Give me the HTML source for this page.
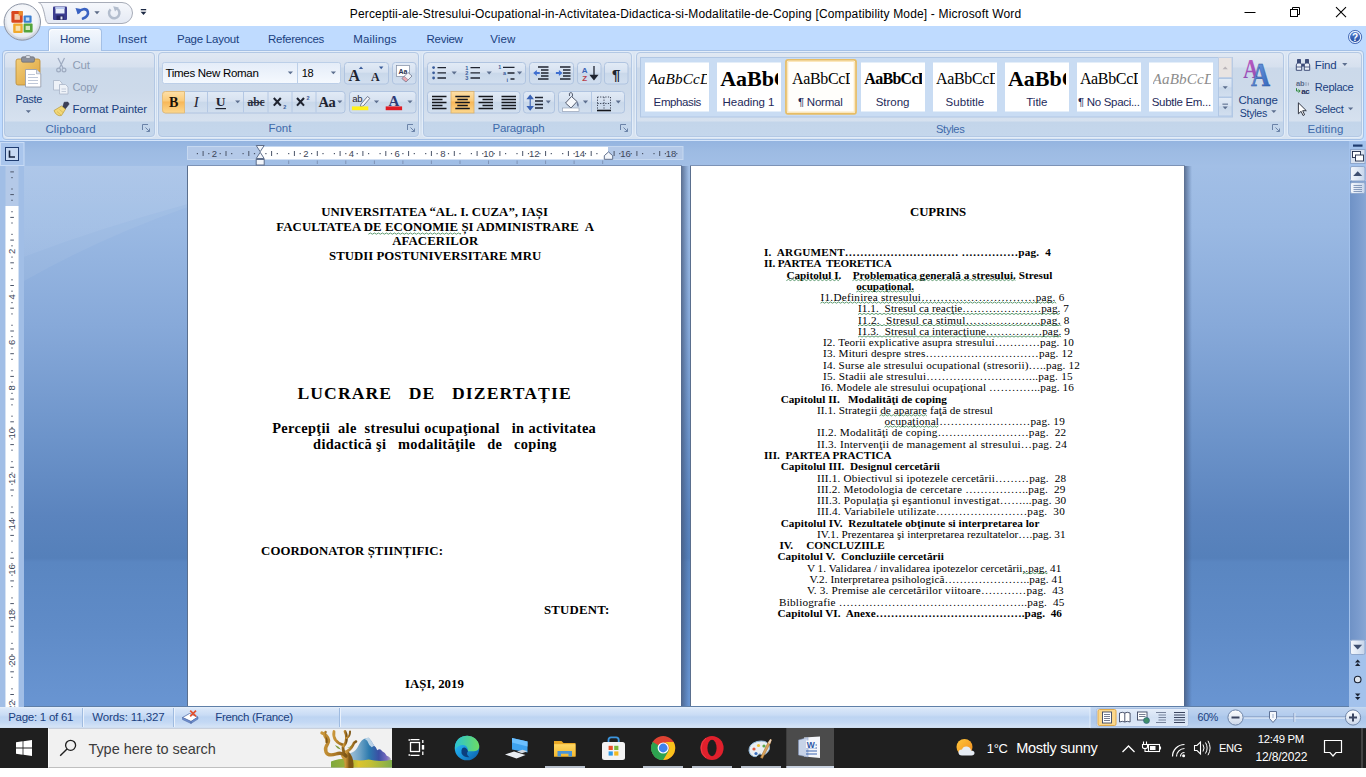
<!DOCTYPE html>
<html><head><meta charset="utf-8"><title>Word</title>
<style>
*{box-sizing:border-box;margin:0;padding:0}
html,body{width:1366px;height:777px;overflow:hidden;background:#fff}
body{position:relative;font-family:"Liberation Sans",sans-serif;font-size:12px;color:#1a3f80}
.a{position:absolute}
.t{position:absolute;white-space:pre;line-height:normal}
.sf{font-family:"Liberation Serif",serif;color:#000}
/* ---------- title / tabs ---------- */
#titlebar{left:0;top:0;width:1366px;height:27px;background:#fff}
#tabrow{left:0;top:26px;width:1366px;height:24px;background:#bfdbff}
#hometab{left:48px;top:28px;width:54px;height:23px;border:1px solid #a4c0e6;border-bottom:none;border-radius:4px 4px 0 0;background:linear-gradient(#f4f8fd,#e8f0fa 55%,#dde7f4);box-shadow:inset 1px 1px 0 #fff}
#ribbonwrap{left:0;top:50px;width:1366px;height:92px;background:#bfdbff}
#ribbon{left:2px;top:50px;width:1362px;height:90px;border:1px solid #a4c0e6;border-radius:4px;background:linear-gradient(#dde7f4,#d2dfee 20%,#ccdaeb 60%,#d9e4f1 100%);box-shadow:0 1px 0 #d6e6fb}
.grp{position:absolute;top:52px;height:85px;border:1px solid #b3c8e4;border-radius:4px;background:linear-gradient(#e0e8f3 0px,#d6e0ee 14px,#cbd9ea 15px,#cddaea 40px,#d6e1ef 68px,#c3d5ea 69px,#c5d7ec 85px);box-shadow:0 0 0 1px #e3edf9}
/* ---------- workspace ---------- */
#rulerband{left:0;top:141px;width:1366px;height:25px;background:linear-gradient(#94b4e0,#9dbbe3 40%,#a2bfe6)}
#workspace{left:0;top:166px;width:1366px;height:541px;background:linear-gradient(#a2bfe6 0px,#9ab9e3 60px,#87a9d9 160px,#6d94ca 270px,#5b84be 350px,#5580ba 392px,#5a86c1 396px,#5f8bc7 460px,#6995d2 541px)}
.page{position:absolute;top:166px;height:541px;background:#fff}
/* ---------- status / taskbar ---------- */
#status{left:0;top:706px;width:1366px;height:23px;background:linear-gradient(#5f7fa8 0,#5f7fa8 1px,#e6effb 1px,#d8e6f8 3px,#c9dcf5 9px,#bdd4f2 11px,#c3d8f4 16px,#d4e3f6 21px,#cbdaee 22px,#b9c6da 23px)}
#taskbar{left:0;top:728px;width:1366px;height:40px;background:#1f1f1f}
#search{left:48px;top:728px;width:344px;height:40px;background:#f1f1f1;border-top:1px solid #c9d0dc;border-bottom:1px solid #bfbfbf;border-left:1px solid #fafafa}
</style></head><body>
<div id="titlebar" class="a"></div>
<div id="tabrow" class="a"></div>
<div id="ribbonwrap" class="a"></div>
<div id="ribbon" class="a"></div>
<div id="hometab" class="a"></div>
<div class="grp" style="left:4px;width:151px"></div>
<div class="grp" style="left:158px;width:261px"></div>
<div class="grp" style="left:423px;width:209px"></div>
<div class="grp" style="left:636px;width:648px"></div>
<div class="grp" style="left:1288px;width:74px"></div>
<div id="rulerband" class="a"></div>
<div id="workspace" class="a"></div>
<svg class="a" style="left:0;top:166px" width="1366" height="541" viewBox="0 166 1366 541">
 <defs>
  <linearGradient id="sw1" x1="0" y1="0" x2="0" y2="1"><stop offset="0" stop-color="#fff" stop-opacity=".13"/><stop offset="1" stop-color="#fff" stop-opacity=".10"/></linearGradient>
  <linearGradient id="psh" x1="0" y1="0" x2="1" y2="0"><stop offset="0" stop-color="#4a5a78" stop-opacity=".8"/><stop offset="1" stop-color="#3c5a8c" stop-opacity="0"/></linearGradient>
 </defs>
 <path d="M24 166 H188 V204 Q100 228 24 257 Z" fill="url(#sw1)"/>
 <path d="M24 257 Q100 228 188 204 V207 Q100 238 24 281 Z" fill="#fff" fill-opacity=".06"/>
 <rect x="681" y="166" width="8" height="541" fill="url(#psh)"/>
 <rect x="1184" y="166" width="8" height="541" fill="url(#psh)"/>
</svg>
<div class="page" style="left:188px;width:493px"></div>
<div class="page" style="left:691px;width:493px"></div>
<div class="a" style="left:187px;top:166px;width:1px;height:541px;background:#5a6f8e"></div>
<div class="a" style="left:690px;top:166px;width:1px;height:541px;background:#5a6f8e"></div>
<div class="a" style="left:187px;top:165px;width:495px;height:1px;background:#7d93b6"></div>
<div class="a" style="left:690px;top:165px;width:495px;height:1px;background:#7d93b6"></div>
<div id="status" class="a"></div>
<div id="taskbar" class="a"></div>
<div id="search" class="a"></div>
<!-- title bar art -->
<svg class="a" style="left:0;top:0" width="1366" height="52" viewBox="0 0 1366 52">
 <defs>
  <radialGradient id="ob" cx=".5" cy=".35" r=".75"><stop offset="0" stop-color="#ffffff"/><stop offset=".55" stop-color="#eef1f6"/><stop offset=".8" stop-color="#cfd5df"/><stop offset="1" stop-color="#9aa3b2"/></radialGradient>
  <linearGradient id="qat" x1="0" y1="0" x2="0" y2="1"><stop offset="0" stop-color="#f6f8fc"/><stop offset="1" stop-color="#e4e9f3"/></linearGradient>
  <linearGradient id="hlp" x1="0" y1="0" x2="0" y2="1"><stop offset="0" stop-color="#5b86d6"/><stop offset="1" stop-color="#1f469c"/></linearGradient>
 </defs>
 <!-- QAT -->
 <path d="M38.5 2.5 H122 A10.5 10.5 0 0 1 122 23.5 H49 C45.5 23.5 45.5 18 44 12 C42.5 6 41 3 38.5 2.5 Z" fill="url(#qat)" stroke="#a7acb8" stroke-width="1"/>
 <!-- save -->
 <g>
  <rect x="53" y="6.5" width="14" height="13.5" rx="1" fill="#3b3c8f"/>
  <rect x="55.5" y="7" width="9" height="6.5" fill="#e8eefb"/>
  <rect x="55.5" y="7" width="9" height="2" fill="#b9c7ee"/>
  <rect x="56.5" y="15.5" width="7" height="4.5" fill="#23235f"/>
  <rect x="60.5" y="16.5" width="2" height="3" fill="#e1e6f5"/>
 </g>
 <!-- undo -->
 <path d="M78.500 12.500 C81 8.500 86.500 8 87.800 11.600 C88.800 14.600 86.500 17.500 83 18.600" fill="none" stroke="#3a62c2" stroke-width="2.600" stroke-linecap="round"/>
 <path d="M75.500 8 l6.800 1.200 l-4.600 5.400 z" fill="#3a62c2"/>
 <path d="M94.3 11.2 h5.4 l-2.7 3 z" fill="#5b6a86"/>
 <!-- redo (disabled) -->
 <path d="M116.800 8.500 A5.200 5.200 0 1 1 110.600 9.300" fill="none" stroke="#b3bdcd" stroke-width="2.500"/>
 <path d="M113.200 6.200 l5.600 1.200 l-3.800 4.200 z" fill="#b3bdcd"/>
 <!-- customize -->
 <rect x="140.8" y="9" width="5.4" height="1.3" fill="#1d2a44"/>
 <path d="M140.6 11.8 h5.8 l-2.9 3.2 z" fill="#1d2a44"/>
 <!-- office button -->
 <circle cx="22.3" cy="22" r="18.2" fill="url(#ob)" stroke="#8d95a5" stroke-width="1"/>
 <circle cx="22.3" cy="22" r="15.6" fill="#f4f6fa" fill-opacity=".55"/>
 <g>
  <rect x="11.4" y="11" width="11.3" height="11.7" rx="1.2" fill="#d9471f"/>
  <rect x="14.5" y="14" width="5.4" height="5.8" fill="#f1c9a8"/>
  <rect x="18.6" y="11" width="4.1" height="4.5" fill="#e98a2b"/>
  <rect x="23.6" y="15.4" width="8" height="7.3" rx="1" fill="#3b7fd0"/>
  <rect x="25.8" y="17.4" width="3.6" height="3.4" fill="#c5dcf3"/>
  <rect x="13.2" y="23.6" width="9.5" height="9.4" rx="1" fill="#f1a92c"/>
  <rect x="15.6" y="25.8" width="4.8" height="5" fill="#f9e2ad"/>
  <rect x="23.6" y="23.6" width="9" height="9" rx="1" fill="#55a53a"/>
  <rect x="25.6" y="25.8" width="4.4" height="4.2" fill="#d2e8bd"/>
 </g>
 <!-- window controls -->
 <rect x="1244.5" y="12" width="11" height="1" fill="#000"/>
 <g fill="none" stroke="#000" stroke-width="1">
  <rect x="1290.5" y="9.5" width="7" height="7"/>
  <path d="M1292.5 9.5 V7.5 H1299.5 V14.5 H1297.5"/>
  <path d="M1336 7.2 L1346 17.2 M1346 7.2 L1336 17.2" stroke-width="1.1"/>
 </g>
 <!-- help -->
 <circle cx="1355.1" cy="37" r="5.600" fill="url(#hlp)" stroke="#e8f1fc" stroke-width="1.1"/>
 <circle cx="1355.1" cy="37" r="6.600" fill="none" stroke="#3a5fae" stroke-width=".9"/>
 <text x="1355.1" y="40.600" font-family="Liberation Sans" font-weight="bold" font-size="10" fill="#fff" text-anchor="middle">?</text>
 <!-- tab row bottom line -->
</svg>

<svg class="a" style="left:0;top:50px" width="1366" height="92" viewBox="0 50 1366 92">
<defs>
 <linearGradient id="bg" x1="0" y1="0" x2="0" y2="1"><stop offset="0" stop-color="#e2ebf6"/><stop offset=".45" stop-color="#d6e1f0"/><stop offset=".5" stop-color="#c9d8ea"/><stop offset="1" stop-color="#d2dfef"/></linearGradient>
 <linearGradient id="or" x1="0" y1="0" x2="0" y2="1"><stop offset="0" stop-color="#fde0a8"/><stop offset=".42" stop-color="#fbcb7a"/><stop offset=".5" stop-color="#f8b85a"/><stop offset="1" stop-color="#fcd88e"/></linearGradient>
 <linearGradient id="cb" x1="0" y1="0" x2="0" y2="1"><stop offset="0" stop-color="#e4ecf8"/><stop offset="1" stop-color="#f5f9fe"/></linearGradient>
 <linearGradient id="clipb" x1="0" y1="0" x2="1" y2="1"><stop offset="0" stop-color="#f3cf7a"/><stop offset="1" stop-color="#dca23c"/></linearGradient>
 <linearGradient id="chA" x1="0" y1="0" x2="1" y2="1"><stop offset="0" stop-color="#7da7e8"/><stop offset="1" stop-color="#2b5fb7"/></linearGradient>
 <linearGradient id="chB" x1="0" y1="0" x2="0" y2="1"><stop offset="0" stop-color="#c45bc4"/><stop offset="1" stop-color="#8a4ab0"/></linearGradient>
 <path id="dd" d="M-2.6 -1.4 h5.2 l-2.6 2.9 z" fill="#5d6f8f"/>
 <g id="dl"><path d="M0 0 h5.5 M0 0 v5.5" stroke="#6b83a8" stroke-width="1" fill="none"/><path d="M3 3 l4 4 M7 4 v3 h-3" stroke="#6b83a8" stroke-width="1" fill="none"/></g>
</defs>

<!-- ============ CLIPBOARD ============ -->
<g>
 <!-- paste icon -->
 <rect x="16" y="59" width="24" height="26" rx="2" fill="url(#clipb)" stroke="#b98a36" stroke-width=".8"/>
 <rect x="21.5" y="56.8" width="13" height="5.4" rx="1.5" fill="#8b8f99" stroke="#5f636e" stroke-width=".6"/>
 <rect x="25.5" y="55.5" width="5" height="3" rx="1.5" fill="#d8dbe2" stroke="#5f636e" stroke-width=".5"/>
 <path d="M25.5 69.5 H36.5 L40.8 73.8 V87 H25.5 Z" fill="#fff" stroke="#8f97a8" stroke-width=".8"/>
 <path d="M36.5 69.5 V73.8 H40.8" fill="#dfe5ef" stroke="#8f97a8" stroke-width=".6"/>
 <path d="M28 74.5 h7 M28 77.5 h10 M28 80.5 h10 M28 83.5 h10" stroke="#b8c2d4" stroke-width=".9"/>
 <use href="#dd" x="28.4" y="111.6"/>
 <!-- cut (disabled) -->
 <g stroke="#9eabc0" fill="none" stroke-width="1.2">
  <path d="M58 58 L63 68 M64.5 58 L59.5 68"/>
  <circle cx="58.6" cy="70" r="1.9"/><circle cx="64" cy="70" r="1.9"/>
 </g>
 <!-- copy (disabled) -->
 <g fill="#eef2f8" stroke="#a9b5c8" stroke-width=".8">
  <path d="M53.5 80.5 h6 l2.5 2.5 v7 h-8.5 z"/>
  <path d="M59.5 84.5 h6 l2.5 2.5 v7 h-8.5 z"/>
  <path d="M61.5 89 h4.5 M61.5 91.5 h4.5" stroke="#b7c1d2"/>
 </g>
 <!-- format painter -->
 <g>
  <path d="M64.2 102.2 l3.6 -0.2 l1.4 2 l-4 5 l-2.6 -1.8 z" fill="#3b3f57" stroke="#2a2d40" stroke-width=".5"/>
  <path d="M54 110.5 l7.5 -4.5 l4 3.2 l-4 6.3 q-2.5 .8 -4.5 -.8 q-2.5 -1.8 -3 -4.2 z" fill="#f2d777" stroke="#b79a3a" stroke-width=".7"/>
  <path d="M57 111.5 l4 3.5 M59.5 109.5 l3.5 3" stroke="#caa94a" stroke-width=".6"/>
 </g>
 <use href="#dl" x="142.5" y="124.5"/>
</g>

<!-- ============ FONT ============ -->
<g>
 <!-- combo boxes -->
 <rect x="162.5" y="62.5" width="178" height="21" rx="2" fill="url(#cb)" stroke="#bccfe8"/>
 <path d="M297.5 63 v20" stroke="#bccfe8"/>
 <use href="#dd" x="290.4" y="72.8"/><use href="#dd" x="333.4" y="72.8"/>
 <!-- grow/shrink -->
 <rect x="344.5" y="62.5" width="44" height="21.5" rx="3" fill="url(#bg)" stroke="#b0c4e0"/>
 <text x="354.3" y="80.5" font-family="Liberation Serif" font-weight="bold" font-size="16" fill="#1f2430" text-anchor="middle">A</text>
 <path d="M358.8 69 h4.4 l-2.2 -2.6 z" fill="#3a5c9a"/>
 <text x="375.3" y="80.5" font-family="Liberation Serif" font-weight="bold" font-size="12" fill="#1f2430" text-anchor="middle">A</text>
 <path d="M379 66.6 h4.4 l-2.2 2.6 z" fill="#3a5c9a"/>
 <!-- clear formatting -->
 <rect x="392.5" y="62.5" width="23.5" height="21.5" rx="3" fill="url(#bg)" stroke="#b0c4e0"/>
 <rect x="396.5" y="65.5" width="13" height="11" fill="#fff" stroke="#7f8aa0" stroke-width=".7"/>
 <text x="403" y="74" font-family="Liberation Sans" font-size="7" font-weight="bold" fill="#2a3350" text-anchor="middle">Aa</text>
 <path d="M402 78.5 l6 -6 l4 3.5 l-6 6 z" fill="#f3f5fa" stroke="#6f7890" stroke-width=".8"/>
 <path d="M402 78.5 l2.2 -2.2 l4 3.5 l-2.2 2.2 z" fill="#e9a7b0" stroke="#6f7890" stroke-width=".5"/>

 <!-- row 2 group 1 -->
 <rect x="162.5" y="91.5" width="182.5" height="21.5" rx="3" fill="url(#bg)" stroke="#b0c4e0"/>
 <path d="M162.5 94.5 a3 3 0 0 1 3 -3 H184.5 V113 H165.5 a3 3 0 0 1 -3 -3 Z" fill="url(#or)" stroke="#e3bc7a" stroke-width="1"/>
 <path d="M207.5 92 v20.5 M243.5 92 v20.5 M268 92 v20.5 M292 92 v20.5 M316 92 v20.5" stroke="#b4c8e4" stroke-width="1"/>
 <text x="173.6" y="106.8" font-family="Liberation Serif" font-weight="bold" font-size="14" fill="#1a1208" text-anchor="middle">B</text>
 <text x="196.2" y="106.8" font-family="Liberation Serif" font-style="italic" font-size="15" fill="#1f2430" text-anchor="middle">I</text>
 <text x="220.6" y="106" font-family="Liberation Serif" font-weight="bold" font-size="13.5" fill="#1f2430" text-anchor="middle">U</text>
 <rect x="215.5" y="108" width="10.5" height="1.2" fill="#1f2430"/>
 <use href="#dd" x="237.7" y="101.8"/>
 <text x="256" y="106" font-family="Liberation Serif" font-weight="bold" font-size="11.5" fill="#2a3040" text-anchor="middle">abc</text>
 <rect x="247.5" y="102" width="17" height="1" fill="#2a3040"/>
 <g stroke="#1f2430" stroke-width="2.1" fill="none"><path d="M273.8 98 l7 7.6 M280.8 98 l-7 7.6"/><path d="M297 98 l7 7.6 M304 98 l-7 7.6"/></g>
 <text x="284.8" y="108.6" font-family="Liberation Sans" font-size="5.5" font-weight="bold" fill="#3a5c9a" text-anchor="middle">2</text>
 <text x="308" y="99.8" font-family="Liberation Sans" font-size="5.5" font-weight="bold" fill="#3a5c9a" text-anchor="middle">2</text>
 <text x="327" y="107" font-family="Liberation Serif" font-weight="bold" font-size="14.5" fill="#1f2430" text-anchor="middle" letter-spacing="-.4">Aa</text>
 <use href="#dd" x="339.8" y="101.8"/>
 <!-- row 2 group 2 -->
 <rect x="349.5" y="91.5" width="66.5" height="21.5" rx="3" fill="url(#bg)" stroke="#b0c4e0"/>
 <text x="357.3" y="102.4" font-family="Liberation Sans" font-size="9.5" fill="#1f2430" text-anchor="middle" letter-spacing="-.3">ab</text>
 <path d="M361 104 l6.5 -7.5 l2.3 1.9 l-6.5 7.5 l-3 .9 z" fill="#f4f6fb" stroke="#59627a" stroke-width=".8"/>
 <rect x="351.9" y="106.4" width="16.4" height="3.8" fill="#fff11a"/>
 <use href="#dd" x="376.5" y="101.8"/>
 <text x="393.9" y="105.6" font-family="Liberation Serif" font-weight="bold" font-size="15" fill="#2d3c78" text-anchor="middle">A</text>
 <rect x="385.7" y="106.4" width="16.4" height="3.8" fill="#e01b24"/>
 <use href="#dd" x="410" y="101.8"/>
 <use href="#dl" x="407.5" y="124.5"/>
</g>
<!-- ============ PARAGRAPH ============ -->
<g>
 <!-- row1 -->
 <rect x="427.5" y="62.5" width="98" height="21.5" rx="3" fill="url(#bg)" stroke="#b0c4e0"/>
 
 <!-- bullets -->
 <g fill="#3a5c9a"><circle cx="433.6" cy="67.6" r="1.4"/><circle cx="433.6" cy="72.8" r="1.4"/><circle cx="433.6" cy="78" r="1.4"/></g>
 <path d="M437.5 67.6 h8.5 M437.5 72.8 h8.5 M437.5 78 h8.5" stroke="#1f2430" stroke-width="1.3"/>
 <use href="#dd" x="454.2" y="73"/>
 <!-- numbering -->
 <g font-family="Liberation Sans" font-size="5.6" font-weight="bold" fill="#3a5c9a"><text x="465.2" y="69.6">1</text><text x="465.2" y="74.9">2</text><text x="465.2" y="80.2">3</text></g>
 <path d="M470.5 67.6 h9.5 M470.5 72.8 h9.5 M470.5 78 h9.5" stroke="#1f2430" stroke-width="1.3"/>
 <use href="#dd" x="489.2" y="73"/>
 <!-- multilevel -->
 <g font-family="Liberation Sans" font-size="5.4" font-weight="bold" fill="#3a5c9a"><text x="498.3" y="69.2">1</text><text x="503" y="75">a</text><text x="506.6" y="81.5">i</text></g>
 <path d="M503 67.3 h11.5 M507.5 73 h7 M510.5 79 h4" stroke="#1f2430" stroke-width="1.3"/>
 <use href="#dd" x="519.6" y="73"/>
 <!-- indent -->
 <rect x="529.5" y="62.5" width="44" height="21.5" rx="3" fill="url(#bg)" stroke="#b0c4e0"/>
 <g stroke="#1f2430" stroke-width="1.3"><path d="M538 67 h10.5 M541 70 h7.5 M541 73 h7.5 M541 76 h7.5 M538 79 h10.5" /><path d="M560 67 h10.5 M563 70 h7.5 M563 73 h7.5 M563 76 h7.5 M560 79 h10.5"/></g>
 <path d="M533.2 73 l3.6 -3 v2 h3 v2 h-3 v2 z" fill="#3f6fd0"/>
 <path d="M562.5 73 l-3.6 -3 v2 h-3 v2 h3 v2 z" fill="#3f6fd0"/>
 <!-- sort -->
 <rect x="577.5" y="62.5" width="23.5" height="21.5" rx="3" fill="url(#bg)" stroke="#b0c4e0"/>
 <text x="584.6" y="72.6" font-family="Liberation Sans" font-size="8" font-weight="bold" fill="#3a62b5" text-anchor="middle">A</text>
 <text x="584.6" y="81" font-family="Liberation Sans" font-size="8" font-weight="bold" fill="#b8404a" text-anchor="middle">Z</text>
 <path d="M594 66 v12.5 M590.8 75.5 l3.2 4 l3.2 -4 z" stroke="#1f2430" stroke-width="1.3" fill="#1f2430"/>
 <!-- pilcrow -->
 <rect x="604.5" y="62.5" width="23.5" height="21.5" rx="3" fill="url(#bg)" stroke="#b0c4e0"/>
 <text x="616.2" y="79.5" font-family="Liberation Sans" font-size="15" font-weight="bold" fill="#1f2430" text-anchor="middle">¶</text>
 <!-- row2 -->
 <rect x="427.5" y="91.5" width="92.5" height="21.5" rx="3" fill="url(#bg)" stroke="#b0c4e0"/>
 <rect x="451" y="91.5" width="23" height="21.5" fill="url(#or)" stroke="#d9b06a" stroke-width=".8"/>
 <g stroke="#15171c" stroke-width="1.4">
  <path d="M432 96.5 h14.5 M432 99.5 h10.5 M432 102.5 h14.5 M432 105.5 h10.5 M432 108.5 h14.5"/>
  <path d="M455.3 96.5 h14.5 M457.3 99.5 h10.5 M455.3 102.5 h14.5 M457.3 105.5 h10.5 M455.3 108.5 h14.5"/>
  <path d="M478.5 96.5 h14.5 M482.5 99.5 h10.5 M478.5 102.5 h14.5 M482.5 105.5 h10.5 M478.5 108.5 h14.5"/>
  <path d="M501.5 96.5 h14.5 M501.5 99.5 h14.5 M501.5 102.5 h14.5 M501.5 105.5 h14.5 M501.5 108.5 h14.5"/>
 </g>
 <!-- line spacing -->
 <rect x="523.5" y="91.5" width="31" height="21.5" rx="3" fill="url(#bg)" stroke="#b0c4e0"/>
 <path d="M530.2 96 v13 M527.6 98.6 l2.6 -3.2 l2.6 3.2 z M527.6 106.6 l2.6 3.2 l2.6 -3.2 z" stroke="#3a62b5" stroke-width="1.1" fill="#3a62b5"/>
 <path d="M535 97.5 h8 M535 101 h8 M535 104.5 h8 M535 108 h8" stroke="#1f2430" stroke-width="1.3"/>
 <use href="#dd" x="548.3" y="102"/>
 <!-- shading / borders -->
 <rect x="558.5" y="91.5" width="66" height="21.5" rx="3" fill="url(#bg)" stroke="#b0c4e0"/>
 <path d="M591.5 92 v20.5" stroke="#b4c8e4"/>
 <path d="M565.5 103 l6 -6.5 l5.5 5 l-6 6.5 z" fill="#f6f8fc" stroke="#444c60" stroke-width=".9"/>
 <path d="M569.5 96 q-1 -3.5 1.5 -3.5 q2 .2 1.5 4" fill="none" stroke="#444c60" stroke-width=".9"/>
 <path d="M577 101.5 q2.6 2.6 1.3 5.6 q-2 -1.2 -1.3 -5.6z" fill="#6d7b9a"/>
 <rect x="562.5" y="108" width="16.5" height="3.4" fill="#fff" stroke="#8b97ad" stroke-width=".6"/>
 <use href="#dd" x="585.5" y="102"/>
 <g stroke="#3d4558" stroke-width="1" stroke-dasharray="1.2 1.4" fill="none"><path d="M597.5 97 h13 M597.5 103.5 h13 M597.5 97 v13 M604 97 v13 M610.5 97 v13"/></g>
 <path d="M597 110.5 h14" stroke="#15171c" stroke-width="1.6"/>
 <use href="#dd" x="618.3" y="102"/>
 <use href="#dl" x="620.5" y="124.5"/>
</g>

<!-- ============ STYLES ============ -->
<g>
 <rect x="640.5" y="57.5" width="592" height="59.5" fill="#c9dcf3" stroke="#b1c7e4"/>
 <g fill="#fff">
  <rect x="645" y="62.5" width="64" height="49"/><rect x="717" y="62.5" width="64" height="49"/>
  <rect x="861" y="62.5" width="64" height="49"/><rect x="933" y="62.5" width="64" height="49"/>
  <rect x="1005" y="62.5" width="64" height="49"/><rect x="1077" y="62.5" width="64" height="49"/><rect x="1149" y="62.5" width="64" height="49"/>
 </g>
 <rect x="786" y="59.8" width="70" height="54" rx="2" fill="#fffefb" stroke="#e7bd66" stroke-width="1.8"/>
 <rect x="787.6" y="61.4" width="66.8" height="50.8" rx="1" fill="none" stroke="#fbe7bd" stroke-width="1.4"/>
 <!-- scroll buttons -->
 <rect x="1218.5" y="57.5" width="13.5" height="20" fill="#e9e4e2" stroke="#c1cfe4"/>
 <rect x="1218.5" y="78.5" width="13.5" height="18.5" fill="url(#bg)" stroke="#b1c7e4"/>
 <rect x="1218.5" y="97.5" width="13.5" height="18.5" fill="url(#bg)" stroke="#b1c7e4"/>
 <path d="M1222.6 69.3 h5.2 l-2.6 -2.9 z" fill="#b9b4b8"/>
 <use href="#dd" x="1225.2" y="87.6"/>
 <rect x="1222.4" y="103.6" width="5.6" height="1.1" fill="#5d6f8f"/><use href="#dd" x="1225.2" y="107.8"/>
 <!-- change styles -->
 <text x="1250.8" y="78" font-family="Liberation Serif" font-weight="bold" font-size="27" fill="url(#chB)" text-anchor="middle" transform="translate(1250.8 0) scale(.78 1) translate(-1250.8 0)">A</text>
 <text x="1260.5" y="86" font-family="Liberation Serif" font-weight="bold" font-size="33" fill="url(#chA)" stroke="#2b4f9a" stroke-width=".5" text-anchor="middle" transform="translate(1260.5 0) scale(.8 1) translate(-1260.5 0)">A</text>
 <use href="#dd" x="1273.8" y="111.6"/>
 <use href="#dl" x="1272.5" y="124.5"/>
</g>

<!-- ============ EDITING ============ -->
<g>
 <!-- binoculars -->
 <g fill="#e9eef8" stroke="#2f3d6b" stroke-width=".9">
  <path d="M1296.300 70.300 v-5.500 l1.200 -1.800 v-3.500 h3 v3.500 l1.200 1.800 v5.500 z"/>
  <path d="M1304.300 70.300 v-5.500 l1.200 -1.800 v-3.500 h3 v3.500 l1.200 1.800 v5.500 z"/>
 </g>
 <rect x="1297.500" y="59.500" width="3" height="4" fill="#3b4a78"/><rect x="1305.500" y="59.500" width="3" height="4" fill="#3b4a78"/>
 <rect x="1301.700" y="63.600" width="2.600" height="3" fill="#3b4a78"/>
 <path d="M1296.300 67 h5.400 M1304.300 67 h5.400" stroke="#2f3d6b" stroke-width=".8"/>
 <use href="#dd" x="1344.8" y="64.4"/>
 <!-- replace -->
 <text x="1296" y="86.3" font-family="Liberation Sans" font-size="7.5" font-weight="bold" fill="#5a6a88" letter-spacing="-.2">ab</text>
 <text x="1301.2" y="93.6" font-family="Liberation Sans" font-size="8" font-weight="bold" fill="#1d2c58" letter-spacing="-.3">ac</text>
 <path d="M1296.5 88.2 v2.8 h3.4 M1298.6 89.4 l1.6 1.6 l-1.6 1.6" stroke="#2f8a3c" stroke-width="1" fill="none"/>
 <path d="M1306 82 v4 M1308.3 82.6 v3" stroke="#8c98b0" stroke-width=".9"/>
 <!-- select cursor -->
 <path d="M1298.4 102.8 v11 l2.7 -2.5 l1.9 4.2 l1.6 -.8 l-1.9 -4 h3.6 z" fill="#fff" stroke="#1f2430" stroke-width=".9"/>
 <use href="#dd" x="1350.6" y="108.8"/>
</g>

<!--R3-->
</svg>

<svg class="a" style="left:0;top:141px" width="1366" height="566" viewBox="0 141 1366 566" font-family="Liberation Sans" font-size="9.5" fill="#3c4658">
<defs><linearGradient id="sbb" x1="0" y1="0" x2="1" y2="0"><stop offset="0" stop-color="#f4f7fc"/><stop offset=".5" stop-color="#dfe8f5"/><stop offset="1" stop-color="#c4d3ea"/></linearGradient><linearGradient id="trk" x1="0" y1="0" x2="1" y2="0"><stop offset="0" stop-color="#6f92c6"/><stop offset=".5" stop-color="#7a9bcd"/><stop offset="1" stop-color="#87a6d4"/></linearGradient></defs>
<rect x="0" y="166" width="24" height="541" fill="#a1bee6"/>
<rect x="0.5" y="142.5" width="23.5" height="23" fill="#a9c5ec" stroke="#c9dcf6"/>
<rect x="5.5" y="147.5" width="13" height="13" fill="#c8daf3" stroke="#1f3c70"/>
<path d="M9.5 150.5 v6.5 h5.5" stroke="#15233f" stroke-width="1.6" fill="none"/>
<rect x="187.5" y="146.5" width="495.5" height="13" fill="#b4c9e8" stroke="#c6d8f0" stroke-width="1"/>
<rect x="260" y="147" width="348" height="12.2" fill="#fff"/>
<path d="M203.1 151 v5 M226.0 151 v5 M248.8 151 v5 M271.6 151 v5 M294.4 151 v5 M317.3 151 v5 M340.1 151 v5 M362.9 151 v5 M385.8 151 v5 M408.6 151 v5 M431.4 151 v5 M454.3 151 v5 M477.1 151 v5 M499.9 151 v5 M522.7 151 v5 M545.6 151 v5 M568.4 151 v5 M591.2 151 v5 M614.1 151 v5 M636.9 151 v5 M659.7 151 v5" stroke="#4a5468" stroke-width="1"/>
<g fill="#4a5468"><rect x="196.8" y="153" width="1.2" height="1.2"/><rect x="208.2" y="153" width="1.2" height="1.2"/><rect x="219.6" y="153" width="1.2" height="1.2"/><rect x="231.1" y="153" width="1.2" height="1.2"/><rect x="242.5" y="153" width="1.2" height="1.2"/><rect x="253.9" y="153" width="1.2" height="1.2"/><rect x="265.3" y="153" width="1.2" height="1.2"/><rect x="276.7" y="153" width="1.2" height="1.2"/><rect x="288.1" y="153" width="1.2" height="1.2"/><rect x="299.6" y="153" width="1.2" height="1.2"/><rect x="311.0" y="153" width="1.2" height="1.2"/><rect x="322.4" y="153" width="1.2" height="1.2"/><rect x="333.8" y="153" width="1.2" height="1.2"/><rect x="345.2" y="153" width="1.2" height="1.2"/><rect x="356.6" y="153" width="1.2" height="1.2"/><rect x="368.0" y="153" width="1.2" height="1.2"/><rect x="379.5" y="153" width="1.2" height="1.2"/><rect x="390.9" y="153" width="1.2" height="1.2"/><rect x="402.3" y="153" width="1.2" height="1.2"/><rect x="413.7" y="153" width="1.2" height="1.2"/><rect x="425.1" y="153" width="1.2" height="1.2"/><rect x="436.5" y="153" width="1.2" height="1.2"/><rect x="447.9" y="153" width="1.2" height="1.2"/><rect x="459.4" y="153" width="1.2" height="1.2"/><rect x="470.8" y="153" width="1.2" height="1.2"/><rect x="482.2" y="153" width="1.2" height="1.2"/><rect x="493.6" y="153" width="1.2" height="1.2"/><rect x="505.0" y="153" width="1.2" height="1.2"/><rect x="516.4" y="153" width="1.2" height="1.2"/><rect x="527.9" y="153" width="1.2" height="1.2"/><rect x="539.3" y="153" width="1.2" height="1.2"/><rect x="550.7" y="153" width="1.2" height="1.2"/><rect x="562.1" y="153" width="1.2" height="1.2"/><rect x="573.5" y="153" width="1.2" height="1.2"/><rect x="584.9" y="153" width="1.2" height="1.2"/><rect x="596.3" y="153" width="1.2" height="1.2"/><rect x="607.8" y="153" width="1.2" height="1.2"/><rect x="619.2" y="153" width="1.2" height="1.2"/><rect x="630.6" y="153" width="1.2" height="1.2"/><rect x="642.0" y="153" width="1.2" height="1.2"/><rect x="653.4" y="153" width="1.2" height="1.2"/><rect x="664.8" y="153" width="1.2" height="1.2"/><rect x="676.2" y="153" width="1.2" height="1.2"/></g>
<text x="214.5" y="157" text-anchor="middle">2</text>
<text x="305.9" y="157" text-anchor="middle">2</text>
<text x="351.5" y="157" text-anchor="middle">4</text>
<text x="397.2" y="157" text-anchor="middle">6</text>
<text x="442.8" y="157" text-anchor="middle">8</text>
<text x="488.5" y="157" text-anchor="middle">10</text>
<text x="534.2" y="157" text-anchor="middle">12</text>
<text x="579.8" y="157" text-anchor="middle">14</text>
<text x="625.5" y="157" text-anchor="middle">16</text>
<text x="671.1" y="157" text-anchor="middle">18</text>
<path d="M288.7 160.5 v3.5 M317.3 160.5 v3.5 M345.8 160.5 v3.5 M374.4 160.5 v3.5 M402.9 160.5 v3.5 M431.4 160.5 v3.5 M460.0 160.5 v3.5 M488.5 160.5 v3.5 M517.1 160.5 v3.5 M545.6 160.5 v3.5 M574.1 160.5 v3.5 M602.7 160.5 v3.5" stroke="#7f93b6" stroke-width="1"/>
<g fill="#f3f6fb" stroke="#5f6f8c" stroke-width="1"><path d="M256.2 145.5 h8 l-4 6.2 z"/><path d="M256.2 158.5 h8 l-4 -6.2 z"/><rect x="256.2" y="159.5" width="8" height="5.5"/><path d="M604.3 159.3 v-3.6 l4.2 -3.8 l4.2 3.8 v3.6 z"/></g>
<rect x="5.5" y="166" width="13" height="541" fill="#b4c9e8"/>
<rect x="5.5" y="206.0" width="13" height="501.0" fill="#fff"/>
<path d="M10.3 171.9 h3.6 M10.3 194.6 h3.6 M10.3 217.4 h3.6 M10.3 240.1 h3.6 M10.3 262.8 h3.6 M10.3 285.5 h3.6 M10.3 308.2 h3.6 M10.3 331.0 h3.6 M10.3 353.7 h3.6 M10.3 376.4 h3.6 M10.3 399.1 h3.6 M10.3 421.8 h3.6 M10.3 444.6 h3.6 M10.3 467.3 h3.6 M10.3 490.0 h3.6 M10.3 512.7 h3.6 M10.3 535.4 h3.6 M10.3 558.2 h3.6 M10.3 580.9 h3.6 M10.3 603.6 h3.6 M10.3 626.3 h3.6 M10.3 649.0 h3.6 M10.3 671.8 h3.6 M10.3 694.5 h3.6" stroke="#4a5468" stroke-width="1"/>
<g fill="#4a5468"><rect x="11.4" y="177.0" width="1.2" height="1.2"/><rect x="11.4" y="188.4" width="1.2" height="1.2"/><rect x="11.4" y="199.7" width="1.2" height="1.2"/><rect x="11.4" y="211.1" width="1.2" height="1.2"/><rect x="11.4" y="222.4" width="1.2" height="1.2"/><rect x="11.4" y="233.8" width="1.2" height="1.2"/><rect x="11.4" y="245.2" width="1.2" height="1.2"/><rect x="11.4" y="256.5" width="1.2" height="1.2"/><rect x="11.4" y="267.9" width="1.2" height="1.2"/><rect x="11.4" y="279.2" width="1.2" height="1.2"/><rect x="11.4" y="290.6" width="1.2" height="1.2"/><rect x="11.4" y="302.0" width="1.2" height="1.2"/><rect x="11.4" y="313.3" width="1.2" height="1.2"/><rect x="11.4" y="324.7" width="1.2" height="1.2"/><rect x="11.4" y="336.0" width="1.2" height="1.2"/><rect x="11.4" y="347.4" width="1.2" height="1.2"/><rect x="11.4" y="358.8" width="1.2" height="1.2"/><rect x="11.4" y="370.1" width="1.2" height="1.2"/><rect x="11.4" y="381.5" width="1.2" height="1.2"/><rect x="11.4" y="392.8" width="1.2" height="1.2"/><rect x="11.4" y="404.2" width="1.2" height="1.2"/><rect x="11.4" y="415.6" width="1.2" height="1.2"/><rect x="11.4" y="426.9" width="1.2" height="1.2"/><rect x="11.4" y="438.3" width="1.2" height="1.2"/><rect x="11.4" y="449.6" width="1.2" height="1.2"/><rect x="11.4" y="461.0" width="1.2" height="1.2"/><rect x="11.4" y="472.4" width="1.2" height="1.2"/><rect x="11.4" y="483.7" width="1.2" height="1.2"/><rect x="11.4" y="495.1" width="1.2" height="1.2"/><rect x="11.4" y="506.4" width="1.2" height="1.2"/><rect x="11.4" y="517.8" width="1.2" height="1.2"/><rect x="11.4" y="529.2" width="1.2" height="1.2"/><rect x="11.4" y="540.5" width="1.2" height="1.2"/><rect x="11.4" y="551.9" width="1.2" height="1.2"/><rect x="11.4" y="563.2" width="1.2" height="1.2"/><rect x="11.4" y="574.6" width="1.2" height="1.2"/><rect x="11.4" y="586.0" width="1.2" height="1.2"/><rect x="11.4" y="597.3" width="1.2" height="1.2"/><rect x="11.4" y="608.7" width="1.2" height="1.2"/><rect x="11.4" y="620.0" width="1.2" height="1.2"/><rect x="11.4" y="631.4" width="1.2" height="1.2"/><rect x="11.4" y="642.8" width="1.2" height="1.2"/><rect x="11.4" y="654.1" width="1.2" height="1.2"/><rect x="11.4" y="665.5" width="1.2" height="1.2"/><rect x="11.4" y="676.8" width="1.2" height="1.2"/><rect x="11.4" y="688.2" width="1.2" height="1.2"/><rect x="11.4" y="699.6" width="1.2" height="1.2"/></g>
<text transform="translate(15.4 251.4) rotate(-90)" text-anchor="middle">2</text>
<text transform="translate(15.4 296.9) rotate(-90)" text-anchor="middle">4</text>
<text transform="translate(15.4 342.3) rotate(-90)" text-anchor="middle">6</text>
<text transform="translate(15.4 387.8) rotate(-90)" text-anchor="middle">8</text>
<text transform="translate(15.4 433.2) rotate(-90)" text-anchor="middle">10</text>
<text transform="translate(15.4 478.6) rotate(-90)" text-anchor="middle">12</text>
<text transform="translate(15.4 524.1) rotate(-90)" text-anchor="middle">14</text>
<text transform="translate(15.4 569.5) rotate(-90)" text-anchor="middle">16</text>
<text transform="translate(15.4 615.0) rotate(-90)" text-anchor="middle">18</text>
<text transform="translate(15.4 660.4) rotate(-90)" text-anchor="middle">20</text>
<text transform="translate(15.4 705.8) rotate(-90)" text-anchor="middle">22</text>
<rect x="1349" y="141" width="17" height="566" fill="#a3c2ec"/>
<rect x="1350" y="181" width="16" height="459" fill="url(#trk)"/>
<rect x="1353" y="144.5" width="9.5" height="2.2" fill="#1f3c70"/>
<rect x="1350.5" y="149.5" width="14.5" height="14" fill="#d9e2ef" stroke="#8ea7cd"/>
<rect x="1352.5" y="151.5" width="8" height="6" fill="#fff" stroke="#1f2c48" stroke-width=".9"/><rect x="1355.5" y="155" width="8" height="6" fill="#fff" stroke="#1f2c48" stroke-width=".9"/>
<rect x="1350.5" y="166.5" width="14.5" height="14.5" rx="1.5" fill="url(#sbb)" stroke="#8ea7cd"/>
<path d="M1353.2 176 h9 l-4.5 -4.8 z" fill="#3e4f70"/>
<rect x="1350.5" y="182.5" width="14.5" height="11" rx="1.5" fill="url(#sbb)" stroke="#8ea7cd"/>
<path d="M1353.5 185.5 h8.5 M1353.5 187.5 h8.5 M1353.5 189.5 h8.5 M1353.5 191.5 h8.5" stroke="#6f86ad" stroke-width=".8"/>
<rect x="1350.5" y="640" width="14.5" height="14.5" rx="1.5" fill="url(#sbb)" stroke="#8ea7cd"/>
<path d="M1353.2 644.8 h9 l-4.5 4.8 z" fill="#3e4f70"/>
<g fill="#1a2233"><path d="M1355 662.5 h5.4 l-2.7 -3 z M1355 666 h5.4 l-2.7 -3 z"/><path d="M1355 693.5 h5.4 l-2.7 3 z M1355 697 h5.4 l-2.7 3 z"/></g>
<circle cx="1357.7" cy="679.5" r="3.3" fill="#dfe5ee" stroke="#1a2233" stroke-width="1.1"/>
</svg>
<svg class="a" style="left:0;top:706px" width="1366" height="23" viewBox="0 706 1366 23">
 <defs>
  <linearGradient id="vb" x1="0" y1="0" x2="0" y2="1"><stop offset="0" stop-color="#e7effa"/><stop offset=".5" stop-color="#d3e1f4"/><stop offset="1" stop-color="#dfe9f7"/></linearGradient>
  <linearGradient id="zc" x1="0" y1="0" x2="0" y2="1"><stop offset="0" stop-color="#ffffff"/><stop offset="1" stop-color="#c9d6ea"/></linearGradient>
 </defs>
 <!-- separators -->
 <g stroke="#9fbbe0" stroke-width="1"><path d="M82.5 708 v19 M173.5 708 v19 M339.5 708 v19"/></g>
 <g stroke="#e9f1fc" stroke-width="1"><path d="M83.5 708 v19 M174.5 708 v19 M340.5 708 v19"/></g>
 <!-- proofing icon -->
 <path d="M182.5 717.5 l7 -4 l8.5 3.5 l-7 4.5 z" fill="#fff" stroke="#5570a8" stroke-width=".8"/>
 <path d="M182.5 717.5 v2 l8.5 4 v-2 z M191 721.5 v2 l7 -4.5 v-2 z" fill="#6f8fd0" stroke="#4a66a0" stroke-width=".5"/>
 <path d="M190.2 710.6 l5.8 5.8 M196 710.6 l-5.8 5.8" stroke="#e2502e" stroke-width="1.7"/>
 <!-- right part -->
 <rect x="1090" y="707" width="276" height="21.500" fill="#86aade" fill-opacity=".32"/><rect x="1089.500" y="707" width="1" height="21" fill="#e6effb"/>
 <rect x="1096.5" y="708.5" width="92" height="18" rx="2" fill="url(#vb)" stroke="#a9c0e2"/>
 <rect x="1098" y="709.5" width="18" height="16" rx="1.5" fill="#fbd88c" stroke="#e0a94a"/>
 <g stroke="#3b4560" stroke-width=".9" fill="#fff">
  <rect x="1102.5" y="712" width="9" height="11"/><path d="M1104 714.5 h6 M1104 716.5 h6 M1104 718.5 h6 M1104 720.5 h6" stroke-width=".7"/>
  <path d="M1119.5 713 q3 -1.4 5.3 0 q2.3 -1.4 5.3 0 v9 q-3 -1.4 -5.3 0 q-2.3 -1.4 -5.3 0 z M1124.8 713 v9"/>
  <rect x="1137.5" y="712" width="9.5" height="8"/><path d="M1139 714.5 h6.5 M1139 716.5 h6.5" stroke-width=".7"/>
 </g>
 <circle cx="1146.5" cy="720.5" r="3" fill="#3f8f6a" stroke="#2c5f86" stroke-width=".6"/>
 <g stroke="#6c7892" stroke-width=".9"><path d="M1156 712.5 h10 M1158.5 715 h7.5 M1158.5 717.5 h7.5 M1158.5 720 h7.5 M1156 722.5 h10"/></g>
 <g stroke="#3b4560" stroke-width="1"><path d="M1174 712.5 h11 M1174 715 h11 M1174 717.5 h11 M1174 720 h11 M1174 722.5 h11"/></g>
 <!-- zoom slider -->
 <circle cx="1235.5" cy="717.5" r="7.6" fill="url(#zc)" stroke="#6f85a8" stroke-width="1"/>
 <rect x="1231.5" y="716.5" width="8" height="2" fill="#3b4560"/>
 <circle cx="1353" cy="717.5" r="7.6" fill="url(#zc)" stroke="#6f85a8" stroke-width="1"/>
 <path d="M1349 717.5 h8 M1353 713.5 v8" stroke="#3b4560" stroke-width="2"/>
 <path d="M1244 717 h101" stroke="#7c93b8" stroke-width="1"/><path d="M1244 718 h101" stroke="#eef4fc" stroke-width="1"/>
 <path d="M1294.8 713 v9" stroke="#eef4fc" stroke-width="1"/><path d="M1293.8 713 v9" stroke="#8ca2c6" stroke-width="1"/>
 <path d="M1269.5 711.5 h7 v7 l-3.5 4 l-3.5 -4 z" fill="#f4f7fc" stroke="#5f7397" stroke-width="1"/>
 <path d="M1273 714 v4" stroke="#9fb0cc" stroke-width="1"/>
</svg>

<svg class="a" style="left:0;top:728px" width="1366" height="40" viewBox="0 728 1366 40">
 <defs>
  <linearGradient id="edg" x1="0" y1="0" x2="1" y2="1"><stop offset="0" stop-color="#35c1f1"/><stop offset=".45" stop-color="#1b9de2"/><stop offset="1" stop-color="#0c59a4"/></linearGradient>
  <linearGradient id="edg2" x1="0" y1="0" x2="1" y2="0"><stop offset="0" stop-color="#2bc3d2"/><stop offset="1" stop-color="#6ddc63"/></linearGradient>
  <linearGradient id="sun" x1="0" y1="0" x2="1" y2="1"><stop offset="0" stop-color="#ffc63a"/><stop offset="1" stop-color="#f08a1d"/></linearGradient>
  <linearGradient id="fold" x1="0" y1="0" x2="0" y2="1"><stop offset="0" stop-color="#ffd965"/><stop offset="1" stop-color="#f3b72e"/></linearGradient>
 </defs>
 <!-- start -->
 <g fill="#fff"><path d="M16 742.2 l6.6 -.9 v6.3 h-6.6 z M23.4 741.2 l8.6 -1.2 v7.6 h-8.6 z M16 748.4 h6.6 v6.3 l-6.6 -.9 z M23.4 748.4 h8.6 v7.6 l-8.6 -1.2 z"/></g>
 <!-- search glass -->
 <circle cx="70.600" cy="745.300" r="5" fill="none" stroke="#1f1f1f" stroke-width="1.300"/><path d="M67 748.900 l-6.800 6.800" stroke="#1f1f1f" stroke-width="1.400"/>
 <!-- illustration -->
 <g>
  <defs>
   <linearGradient id="gnd" x1="0" y1="0" x2="1" y2="0"><stop offset="0" stop-color="#7fa83c"/><stop offset=".3" stop-color="#9fb23a"/><stop offset=".45" stop-color="#dcc42c"/><stop offset=".65" stop-color="#c3bf35"/><stop offset="1" stop-color="#7fae4c"/></linearGradient>
   <linearGradient id="mtn" x1="0" y1="0" x2="1" y2="0"><stop offset="0" stop-color="#c3d6e6"/><stop offset=".35" stop-color="#6fa3c6"/><stop offset=".55" stop-color="#2c7aae"/><stop offset=".75" stop-color="#3a4fa4"/><stop offset=".92" stop-color="#7a6cc0"/><stop offset="1" stop-color="#a9a6b8"/></linearGradient>
   <linearGradient id="trk2" x1="0" y1="0" x2="1" y2="0"><stop offset="0" stop-color="#c9963a"/><stop offset=".6" stop-color="#a87524"/><stop offset="1" stop-color="#7d5616"/></linearGradient>
  </defs>
  <path d="M331 767.500 v-6 q8 -3.500 20 -3 q20 -1 41 1.500 v7.500 z" fill="url(#gnd)"/>
  <path d="M343 759 q4 -5 9 -6.500 q4 -1.500 6.500 -7 q3 -6 6 -6.800 q2.500 -1 4.200 -1 q3 3 5.500 8 q2 1 3 4.500 q3 -2.500 5 1 q3 1 4.500 4.500 q2.500 .5 4 2.800 v1.500 q-12 2 -22 -.5 q-8 1.500 -14 .5 q-7 .5 -11.700 -1.500 z" fill="url(#mtn)"/>
  <path d="M364.500 738.700 q2.500 -1 4.200 -1 q3 3 5.500 8 l-2.500 1.500 q-3 -2 -4.500 -6.500 z" fill="#e8f2fa" opacity=".75"/>
  <g fill="none" stroke="url(#trk2)" stroke-linecap="round">
   <path d="M349 767 q.5 -8 -3.500 -12" stroke-width="9"/>
   <path d="M346 756 q-4 -4 -10 -2 q-8 2.500 -10 -2 q-1.500 -4 1.500 -8 q2.500 -4 -1 -8 q-1.500 -2 -4.500 -3" stroke-width="3.400"/>
   <path d="M326.500 742 q.5 -3 -1.500 -5 q-1.500 -2 .5 -5" stroke-width="2.400"/>
   <path d="M345 755 q-3 -6 -1.500 -10 q-5 -1 -8 -5 q-2.500 -4 -1.500 -8.500" stroke-width="2.800"/>
   <path d="M343.500 746 q3 -3 3 -8 q0 -4 -1.500 -6.500" stroke-width="2.800"/>
   <path d="M346.500 738 q3.500 -1 3.500 -6.500" stroke-width="2"/>
   <path d="M346 752 q5 -2.500 7 -7 q.5 -2.500 3 -3.500" stroke-width="2.600"/>
  </g>
  <path d="M335 745 q4 1 6 4.500 q-4 -.5 -6 -4.500 z M347 748 q3 -1 5 -3 q-1 3 -5 3z" fill="#7f9a3a"/>
 </g>
 <!-- task view -->
 <g fill="none" stroke="#fff" stroke-width="1.3"><rect x="410.5" y="742.5" width="9" height="9"/><path d="M408.5 740 h1.600 M408.500 755 h1.600"/><path d="M410.500 739.700 h9 M410.500 755.300 h9"/><path d="M422.800 740 v3 M422.800 751.500 v3.500"/></g>
 <rect x="421.800" y="745" width="2.400" height="4.600" fill="#fff"/>
 <!-- edge -->
 <g>
  <circle cx="467" cy="748" r="12.300" fill="url(#edg)"/>
  <path d="M455 746 q2 -10.500 12.500 -10.300 q9.500 .4 11.800 10 q.2 5 -5.300 5.600 h-6 q0 -6 -5 -6.300 q-5 -.2 -8 5 z" fill="url(#edg2)"/>
  <path d="M462.500 748 q3.500 -1.600 5.500 3.300 q-2.500 3 1.500 6 q-6 .5 -8 -4 q-1 -3 1 -5.300 z" fill="#0b3f7e"/>
 </g>
 <!-- this pc -->
 <g>
  <path d="M512 738 l15.500 3.500 v11 l-15.500 -3 z" fill="#3ea2ef"/><path d="M512 738 l15.500 3.500 v5 l-15.500 -4 z" fill="#6cc0ff"/>
  <path d="M505 754.500 l9 -3 l11.500 3.500 l-9 3.500 z" fill="#e9edf2"/><path d="M517 751.500 l5.500 -1.700 l5 1.500 l-5.500 2 z" fill="#cfd6df"/>
 </g>
 <!-- explorer -->
 <g>
  <path d="M554 741 h7.500 l2 2 h12 v13.500 h-21.500 z" fill="#e9a825"/>
  <rect x="554" y="744.200" width="21.500" height="12.300" fill="url(#fold)"/>
  <path d="M557.500 756.500 v-5.500 h14.500 v5.500 h-3.500 v-2.800 h-7.500 v2.800 z" fill="#4a94d6"/>
 </g>
 <!-- store -->
 <g>
  <path d="M608.500 742.500 v-2.500 q0 -2.600 2.600 -2.600 h5 q2.600 0 2.600 2.600 v2.500" fill="none" stroke="#3c96df" stroke-width="1.800"/>
  <rect x="602" y="742" width="23" height="18" rx="2.500" fill="#f3f3f3"/>
  <rect x="608.600" y="745.800" width="4.200" height="4.200" fill="#e8502a"/><rect x="614.200" y="745.800" width="4.200" height="4.200" fill="#7cb83a"/>
  <rect x="608.600" y="751.400" width="4.200" height="4.200" fill="#2f9be8"/><rect x="614.200" y="751.400" width="4.200" height="4.200" fill="#f3b91f"/>
 </g>
 <!-- chrome -->
 <g>
  <circle cx="663.200" cy="748" r="12" fill="#de4232"/>
  <path d="M663.200 748 L652.800 754 A12 12 0 0 0 663.200 760 L669.200 749.500 Z" fill="#2da350"/>
  <path d="M663.200 748 L652.800 742 A12 12 0 0 0 652.800 754 L663.200 760 A12 12 0 0 1 652.800 754 Z" fill="#2da350"/>
  <path d="M652.800 742 A12 12 0 0 0 663.200 760 L668.500 751 L657.900 751 Z" fill="#2da350"/>
  <path d="M675.200 748 A12 12 0 0 1 663.200 760 L668.600 751 A6 6 0 0 0 668.400 745 L674.800 745 Q675.200 746.500 675.200 748 Z" fill="#f9c21b"/>
  <path d="M673.600 742 H663.200 A6 6 0 0 1 668.400 745 L674.800 745 Q674.400 743.400 673.600 742 Z" fill="#f9c21b"/>
  <circle cx="663.200" cy="748" r="5.600" fill="#fff"/><circle cx="663.200" cy="748" r="4.400" fill="#3f82ee"/>
 </g>
 <!-- opera -->
 <g><ellipse cx="712" cy="748" rx="11.600" ry="12" fill="#e0202c"/><ellipse cx="712" cy="748" rx="4.600" ry="8.300" fill="#1f1f1f"/><path d="M706 738 q-5 4 -5 10 q0 6 5 10" stroke="#ff5a5f" stroke-width="1" fill="none" opacity=".5"/></g>
 <!-- paint -->
 <g>
  <path d="M749 751 q-.5 -7 8 -9.500 q9 -2 12 3.500 q2 5 -3.500 9 q-2.500 1.500 -4 .5 q-1.500 -1.500 -3.500 .5 q-1.500 2.500 -4.500 1.500 q-4 -1.500 -4.500 -5.500 z" fill="#e9eef3" stroke="#8fb6d8" stroke-width="1"/>
  <circle cx="754" cy="749" r="1.600" fill="#e35b3c"/><circle cx="758.500" cy="745.500" r="1.600" fill="#f0c23a"/><circle cx="764" cy="746" r="1.600" fill="#5aa84a"/><circle cx="756" cy="753.500" r="1.600" fill="#3a6fc0"/>
  <path d="M760.500 757.500 l7.500 -15 l2.500 -3.500 l1 1 l-1.500 4 l-7.500 14.500 z" fill="#d9a35b" stroke="#9a6a2e" stroke-width=".5"/>
  <path d="M768 742.500 l2.500 -3.500 l1 1 l-1.500 4 z" fill="#e9d3c0"/>
 </g>
 <!-- word (active) -->
 <rect x="786.300" y="728" width="47.700" height="40" fill="#4b4b4b"/>
 <g>
  <path d="M804 737.500 l16 -1 v21.500 l-16 -1.500 z" fill="#f4f6fa"/>
  <path d="M798.500 740 l9.500 -2.500 v19.500 l-9.500 -2 z" fill="#c7d3e8" stroke="#7f93bd" stroke-width=".5"/>
  <path d="M806 745 h11 M806 748 h11 M806 751 h11 M806 754 h11" stroke="#3a64b0" stroke-width="1.200"/>
  <rect x="806" y="740.500" width="9.500" height="8" fill="#f4f6fa"/>
  <text x="810.800" y="747.600" font-family="Liberation Sans" font-weight="bold" font-size="8.500" fill="#2b57a6" text-anchor="middle">W</text>
 </g>
 <!-- running indicators -->
 <g fill="#b8c0cc"><rect x="545" y="766" width="40" height="2"/><rect x="643" y="766" width="40" height="2"/><rect x="692" y="766" width="40" height="2"/><rect x="741" y="766" width="40" height="2"/></g>
 <rect x="786.300" y="766" width="47.700" height="2" fill="#c9d2e0"/>
 <!-- weather -->
 <circle cx="964.500" cy="747" r="8" fill="url(#sun)"/>
 <path d="M962 755.500 q-3.500 0 -3.500 -3 q0 -3 3.500 -3 q1 -3.500 5 -3 q3.500 .5 4 4 q3.500 0 3.500 2.600 q0 2.400 -3 2.400 z" fill="#e6ecf4"/>
 <!-- tray -->
 <path d="M1122.500 752 l6 -6 l6 6" stroke="#fff" stroke-width="1.300" fill="none"/>
 <g stroke="#fff" stroke-width="1.100" fill="none"><rect x="1148.500" y="744.500" width="11" height="7"/><path d="M1160.500 746.500 v3"/><path d="M1143.500 741.500 v3 M1146.500 741.500 v3 M1142.500 744.500 h5 v2.500 q0 1.500 -2.500 1.500 q-2.500 0 -2.500 -1.500 z M1145 748.500 v3 h3.500" /></g>
 <rect x="1150" y="746" width="5.500" height="4" fill="#fff"/>
 <g stroke="#fff" stroke-width="1.2" fill="none"><path d="M1180.5 756.500 A4 4 0 0 1 1184.500 752.500 M1176.500 756.500 A8 8 0 0 1 1184.500 748.500 M1172.500 756.500 A12 12 0 0 1 1184.500 744.500"/></g>
 <circle cx="1183.600" cy="755.800" r="1.500" fill="#fff"/>
 <g stroke="#fff" stroke-width="1.100" fill="none"><path d="M1194.500 745.500 h2.500 l3.500 -3.500 v12 l-3.500 -3.500 h-2.500 z"/><path d="M1203 744.500 q2 3.500 0 7 M1205.500 742.500 q3.200 5.500 0 11 M1208 740.800 q4.200 7.200 0 14.400" stroke-width="1"/></g>
 <path d="M1324.500 740.500 h17 v12 h-5.500 l-3 3.500 l-3 -3.500 h-5.500 z" stroke="#fff" stroke-width="1.200" fill="none"/>
 <rect x="1361.500" y="728" width="1" height="40" fill="#6a6a6a"/>
</svg>

<span class="t" style='left:321.2px;top:205.1px;font-size:12.8px;font-family:"Liberation Serif";font-weight:bold;letter-spacing:0.067px;color:#000'>UNIVERSITATEA “AL. I. CUZA”, IAȘI</span>
<span class="t" style='left:276.3px;top:220.0px;font-size:12.8px;font-family:"Liberation Serif";font-weight:bold;letter-spacing:0.077px;color:#000'>FACULTATEA DE ECONOMIE ȘI ADMINISTRARE  A</span>
<span class="t" style='left:392.2px;top:234.3px;font-size:12.8px;font-family:"Liberation Serif";font-weight:bold;letter-spacing:0.101px;color:#000'>AFACERILOR</span>
<span class="t" style='left:329.0px;top:248.7px;font-size:12.8px;font-family:"Liberation Serif";font-weight:bold;letter-spacing:0.020px;color:#000'>STUDII POSTUNIVERSITARE MRU</span>
<span class="t" style='left:297.4px;top:382.8px;font-size:17.6px;font-family:"Liberation Serif";font-weight:bold;letter-spacing:1.120px;color:#000'>LUCRARE   DE   DIZERTAȚIE</span>
<span class="t" style='left:272.2px;top:419.7px;font-size:14.4px;font-family:"Liberation Serif";font-weight:bold;letter-spacing:0.347px;color:#000'>Percepţii  ale  stresului ocupaţional   in activitatea</span>
<span class="t" style='left:313.1px;top:435.7px;font-size:14.4px;font-family:"Liberation Serif";font-weight:bold;letter-spacing:0.330px;color:#000'>didactică şi   modalităţile   de   coping</span>
<span class="t" style='left:261.1px;top:544.4px;font-size:12.8px;font-family:"Liberation Serif";font-weight:bold;letter-spacing:0.061px;color:#000'>COORDONATOR ȘTIINȚIFIC:</span>
<span class="t" style='left:544.0px;top:603.4px;font-size:12.8px;font-family:"Liberation Serif";font-weight:bold;letter-spacing:0.229px;color:#000'>STUDENT:</span>
<span class="t" style='left:405.0px;top:676.7px;font-size:12.8px;font-family:"Liberation Serif";font-weight:bold;letter-spacing:0.069px;color:#000'>IAȘI, 2019</span>
<span class="t" style='left:910.1px;top:204.9px;font-size:12.8px;font-family:"Liberation Serif";font-weight:bold;letter-spacing:-0.127px;color:#000'>CUPRINS</span>
<span class="t" style='left:764.0px;top:245.9px;font-size:11.2px;font-family:"Liberation Serif";font-weight:bold;letter-spacing:0.182px;color:#000'>I.  ARGUMENT………………………… ……………pag.  4</span>
<span class="t" style='left:764.0px;top:257.2px;font-size:11.2px;font-family:"Liberation Serif";font-weight:bold;letter-spacing:-0.157px;color:#000'>II. PARTEA  TEORETICA</span>
<span class="t" style='left:786.4px;top:268.5px;font-size:11.2px;font-family:"Liberation Serif";font-weight:bold;letter-spacing:0.025px;color:#000'>Capitolul I.    Problematica generală a stresului. Stresul</span>
<span class="t" style='left:856.3px;top:279.9px;font-size:11.2px;font-family:"Liberation Serif";font-weight:bold;letter-spacing:-0.087px;color:#000'>ocupaţional.</span>
<span class="t" style='left:820.5px;top:291.0px;font-size:11.2px;font-family:"Liberation Serif";letter-spacing:0.258px;color:#000'>I1.Definirea stresului…………………………pag. 6</span>
<span class="t" style='left:858.0px;top:302.3px;font-size:11.2px;font-family:"Liberation Serif";letter-spacing:0.074px;color:#000'>I1.1.  Stresul ca reacţie…………………pag. 7</span>
<span class="t" style='left:858.0px;top:313.6px;font-size:11.2px;font-family:"Liberation Serif";letter-spacing:0.288px;color:#000'>I1.2.  Stresul ca stimul………………..pag. 8</span>
<span class="t" style='left:858.0px;top:324.9px;font-size:11.2px;font-family:"Liberation Serif";letter-spacing:0.078px;color:#000'>I1.3.  Stresul ca interacţiune……………pag. 9</span>
<span class="t" style='left:823.0px;top:336.1px;font-size:11.2px;font-family:"Liberation Serif";letter-spacing:0.149px;color:#000'>I2. Teorii explicative asupra stresului…………pag. 10</span>
<span class="t" style='left:823.0px;top:347.4px;font-size:11.2px;font-family:"Liberation Serif";letter-spacing:0.159px;color:#000'>I3. Mituri despre stres…………………………pag. 12</span>
<span class="t" style='left:823.0px;top:358.7px;font-size:11.2px;font-family:"Liberation Serif";letter-spacing:0.170px;color:#000'>I4. Surse ale stresului ocupational (stresorii)…..pag. 12</span>
<span class="t" style='left:823.0px;top:370.0px;font-size:11.2px;font-family:"Liberation Serif";letter-spacing:0.238px;color:#000'>I5. Stadii ale stresului………………………...pag. 15</span>
<span class="t" style='left:821.0px;top:381.3px;font-size:11.2px;font-family:"Liberation Serif";letter-spacing:0.126px;color:#000'>I6. Modele ale stresului ocupaţional …………..pag. 16</span>
<span class="t" style='left:780.7px;top:392.5px;font-size:11.2px;font-family:"Liberation Serif";font-weight:bold;letter-spacing:-0.005px;color:#000'>Capitolul II.   Modalităţi de coping</span>
<span class="t" style='left:817.0px;top:403.8px;font-size:11.2px;font-family:"Liberation Serif";letter-spacing:0.064px;color:#000'>II.1. Strategii de aparare faţă de stresul</span>
<span class="t" style='left:884.5px;top:415.1px;font-size:11.2px;font-family:"Liberation Serif";letter-spacing:0.226px;color:#000'>ocupaţional……………………pag. 19</span>
<span class="t" style='left:817.0px;top:426.4px;font-size:11.2px;font-family:"Liberation Serif";letter-spacing:0.226px;color:#000'>II.2. Modalităţi de coping……………………pag.  22</span>
<span class="t" style='left:817.0px;top:437.6px;font-size:11.2px;font-family:"Liberation Serif";letter-spacing:0.249px;color:#000'>II.3. Intervenţii de management al stresului…pag. 24</span>
<span class="t" style='left:764.0px;top:448.9px;font-size:11.2px;font-family:"Liberation Serif";font-weight:bold;letter-spacing:0.012px;color:#000'>III.  PARTEA PRACTICA</span>
<span class="t" style='left:780.7px;top:460.2px;font-size:11.2px;font-family:"Liberation Serif";font-weight:bold;letter-spacing:0.020px;color:#000'>Capitolul III.  Designul cercetării</span>
<span class="t" style='left:817.0px;top:471.5px;font-size:11.2px;font-family:"Liberation Serif";letter-spacing:0.190px;color:#000'>III.1. Obiectivul si ipotezele cercetării………pag.  28</span>
<span class="t" style='left:817.0px;top:482.8px;font-size:11.2px;font-family:"Liberation Serif";letter-spacing:0.206px;color:#000'>III.2. Metodologia de cercetare ……………..pag.  29</span>
<span class="t" style='left:817.0px;top:494.0px;font-size:11.2px;font-family:"Liberation Serif";letter-spacing:0.244px;color:#000'>III.3. Populaţia şi eşantionul investigat……...pag. 30</span>
<span class="t" style='left:817.0px;top:505.3px;font-size:11.2px;font-family:"Liberation Serif";letter-spacing:0.239px;color:#000'>III.4. Variabilele utilizate……………………pag.  30</span>
<span class="t" style='left:780.7px;top:516.6px;font-size:11.2px;font-family:"Liberation Serif";font-weight:bold;letter-spacing:0.049px;color:#000'>Capitolul IV.  Rezultatele obţinute si interpretarea lor</span>
<span class="t" style='left:817.0px;top:527.9px;font-size:11.2px;font-family:"Liberation Serif";letter-spacing:0.033px;color:#000'>IV.1. Prezentarea şi interpretarea rezultatelor….pag. 31</span>
<span class="t" style='left:779.5px;top:539.2px;font-size:11.2px;font-family:"Liberation Serif";font-weight:bold;letter-spacing:-0.124px;color:#000'>IV.     CONCLUZIILE</span>
<span class="t" style='left:777.4px;top:550.4px;font-size:11.2px;font-family:"Liberation Serif";font-weight:bold;letter-spacing:0.079px;color:#000'>Capitolul V.  Concluziile cercetării</span>
<span class="t" style='left:806.9px;top:561.7px;font-size:11.2px;font-family:"Liberation Serif";letter-spacing:0.028px;color:#000'>V 1. Validarea / invalidarea ipotezelor cercetării,.pag. 41</span>
<span class="t" style='left:809.4px;top:573.0px;font-size:11.2px;font-family:"Liberation Serif";letter-spacing:0.100px;color:#000'>V.2. Interpretarea psihologică…………………..pag. 41</span>
<span class="t" style='left:806.9px;top:584.3px;font-size:11.2px;font-family:"Liberation Serif";letter-spacing:0.206px;color:#000'>V. 3. Premise ale cercetărilor viitoare…………pag.  43</span>
<span class="t" style='left:779.0px;top:595.5px;font-size:11.2px;font-family:"Liberation Serif";letter-spacing:0.216px;color:#000'>Bibliografie …………………………………………..pag.  45</span>
<span class="t" style='left:777.4px;top:606.8px;font-size:11.2px;font-family:"Liberation Serif";font-weight:bold;letter-spacing:0.047px;color:#000'>Capitolul VI.  Anexe………………………………….pag.  46</span>
<span class="t" style='left:349.8px;top:6.7px;font-size:12px;letter-spacing:0.162px;color:#000'>Perceptii-ale-Stresului-Ocupational-in-Activitatea-Didactica-si-Modalitatile-de-Coping [Compatibility Mode] - Microsoft Word</span>
<span class="t" style='left:60.0px;top:32.7px;font-size:11.5px;letter-spacing:-0.172px'>Home</span>
<span class="t" style='left:118.0px;top:32.7px;font-size:11.5px;letter-spacing:0.039px'>Insert</span>
<span class="t" style='left:177.0px;top:32.7px;font-size:11.5px;letter-spacing:-0.236px'>Page Layout</span>
<span class="t" style='left:268.0px;top:32.7px;font-size:11.5px;letter-spacing:-0.281px'>References</span>
<span class="t" style='left:353.2px;top:32.7px;font-size:11.5px;letter-spacing:0.164px'>Mailings</span>
<span class="t" style='left:426.5px;top:32.7px;font-size:11.5px;letter-spacing:-0.270px'>Review</span>
<span class="t" style='left:490.2px;top:32.7px;font-size:11.5px;letter-spacing:0.095px'>View</span>
<span class="t" style='left:15.4px;top:92.5px;font-size:11.06px;letter-spacing:-0.290px'>Paste</span>
<span class="t" style='left:72.5px;top:58.5px;font-size:11.5px;letter-spacing:-0.269px;color:#8d9cb4'>Cut</span>
<span class="t" style='left:72.5px;top:81.2px;font-size:11.17px;letter-spacing:-0.287px;color:#8d9cb4'>Copy</span>
<span class="t" style='left:72.5px;top:102.8px;font-size:11.5px;letter-spacing:-0.104px'>Format Painter</span>
<span class="t" style='left:45.4px;top:122.5px;font-size:11.5px;letter-spacing:0.141px;color:#3e6aaa'>Clipboard</span>
<span class="t" style='left:268.5px;top:122.4px;font-size:11.5px;letter-spacing:-0.029px;color:#3e6aaa'>Font</span>
<span class="t" style='left:492.5px;top:122.4px;font-size:11.5px;letter-spacing:-0.191px;color:#3e6aaa'>Paragraph</span>
<span class="t" style='left:936.0px;top:122.5px;font-size:11.12px;letter-spacing:-0.294px;color:#3e6aaa'>Styles</span>
<span class="t" style='left:1307.5px;top:122.7px;font-size:11.5px;letter-spacing:0.118px;color:#3e6aaa'>Editing</span>
<span class="t" style='left:165.4px;top:66.7px;font-size:11.5px;letter-spacing:-0.277px;color:#000'>Times New Roman</span>
<span class="t" style='left:301.7px;top:66.7px;font-size:11.05px;letter-spacing:-0.298px;color:#000'>18</span>
<span class="t" style='left:653.6px;top:96.2px;font-size:11.5px;letter-spacing:-0.388px;color:#1e2a5a'>Emphasis</span>
<span class="t" style='left:722.6px;top:96.2px;font-size:11.5px;letter-spacing:-0.071px;color:#1e2a5a'>Heading 1</span>
<span class="t" style='left:797.9px;top:96.2px;font-size:11.5px;letter-spacing:-0.217px;color:#1e2a5a'>¶ Normal</span>
<span class="t" style='left:875.7px;top:96.2px;font-size:11.5px;letter-spacing:-0.015px;color:#1e2a5a'>Strong</span>
<span class="t" style='left:945.5px;top:96.2px;font-size:11.5px;letter-spacing:0.055px;color:#1e2a5a'>Subtitle</span>
<span class="t" style='left:1026.3px;top:96.2px;font-size:11.5px;letter-spacing:-0.023px;color:#1e2a5a'>Title</span>
<span class="t" style='left:1078.0px;top:96.2px;font-size:11.5px;letter-spacing:-0.310px;color:#1e2a5a'>¶ No Spaci...</span>
<span class="t" style='left:1151.7px;top:96.2px;font-size:11.5px;letter-spacing:-0.295px;color:#1e2a5a'>Subtle Em...</span>
<span class="t" style='left:1238.4px;top:93.5px;font-size:11.5px;letter-spacing:-0.166px'>Change</span>
<span class="t" style='left:1239.8px;top:106.5px;font-size:10.61px;letter-spacing:-0.301px'>Styles</span>
<span class="t" style='left:1314.8px;top:59.0px;font-size:11.5px;letter-spacing:-0.169px'>Find</span>
<span class="t" style='left:1314.8px;top:80.7px;font-size:11.12px;letter-spacing:-0.295px'>Replace</span>
<span class="t" style='left:1314.8px;top:103.0px;font-size:10.97px;letter-spacing:-0.300px'>Select</span>
<span class="t" style='left:8.2px;top:711.0px;font-size:11.5px;letter-spacing:-0.263px'>Page: 1 of 61</span>
<span class="t" style='left:92.2px;top:711.0px;font-size:11.5px;letter-spacing:-0.103px'>Words: 11,327</span>
<span class="t" style='left:215.2px;top:711.0px;font-size:11.5px;letter-spacing:-0.323px'>French (France)</span>
<span class="t" style='left:1197.5px;top:711.0px;font-size:10.69px;letter-spacing:-0.302px'>60%</span>
<span class="t" style='left:88.4px;top:741.2px;font-size:14.5px;letter-spacing:-0.041px;color:#3c3c3c'>Type here to search</span>
<span class="t" style='left:986.8px;top:740.7px;font-size:12.93px;letter-spacing:-0.296px;color:#fff'>1°C</span>
<span class="t" style='left:1016.2px;top:739.7px;font-size:14.5px;letter-spacing:-0.269px;color:#fff'>Mostly sunny</span>
<span class="t" style='left:1218.9px;top:742.0px;font-size:11.16px;letter-spacing:-0.296px;color:#fff'>ENG</span>
<span class="t" style='left:1257.8px;top:732.5px;font-size:11.35px;letter-spacing:-0.295px;color:#fff'>12:49 PM</span>
<span class="t" style='left:1255.6px;top:749.6px;font-size:12px;letter-spacing:-0.188px;color:#fff'>12/8/2022</span>
<span class="t" style='left:648.4px;top:70.0px;font-size:15.2px;font-family:"Liberation Serif";font-style:italic;letter-spacing:0.146px;color:#000;width:58.4px;overflow:hidden'>AaBbCcDd</span>
<span class="t" style='left:720.3px;top:65.7px;font-size:22px;font-family:"Liberation Serif";font-weight:bold;letter-spacing:-0.074px;color:#000;width:58.0px;overflow:hidden'>AaBbCc</span>
<span class="t" style='left:792.0px;top:69.8px;font-size:16px;font-family:"Liberation Serif";letter-spacing:-0.352px;color:#000;width:58.3px;overflow:hidden'>AaBbCcDd</span>
<span class="t" style='left:864.3px;top:69.8px;font-size:16px;font-family:"Liberation Serif";font-weight:bold;letter-spacing:-0.714px;color:#000;width:58.2px;overflow:hidden'>AaBbCcDd</span>
<span class="t" style='left:936.0px;top:69.8px;font-size:16px;font-family:"Liberation Serif";letter-spacing:-0.352px;color:#000;width:58.5px;overflow:hidden'>AaBbCcDd</span>
<span class="t" style='left:1007.9px;top:65.7px;font-size:22px;font-family:"Liberation Serif";font-weight:bold;color:#000;width:58.3px;overflow:hidden'>AaBbCc</span>
<span class="t" style='left:1079.9px;top:69.8px;font-size:16px;font-family:"Liberation Serif";letter-spacing:-0.352px;color:#000;width:58.6px;overflow:hidden'>AaBbCcDd</span>
<span class="t" style='left:1152.5px;top:70.0px;font-size:15.2px;font-family:"Liberation Serif";font-style:italic;letter-spacing:0.146px;color:#8c8c8c;width:58.3px;overflow:hidden'>AaBbCcDd</span>
<svg class="a" style="left:0;top:166px" width="1366" height="541" viewBox="0 166 1366 541"><g fill="none" stroke="#2d7d46" stroke-width=".9" stroke-opacity=".85">
<path d="M368.4 234.2 L370.4 233.0 L372.4 234.2 L374.4 233.0 L376.4 234.2 L378.4 233.0 L380.4 234.2 L382.4 233.0 L384.4 234.2 L386.4 233.0 L388.4 234.2 L390.4 233.0 L392.4 234.2 L394.4 233.0 L396.4 234.2 L398.4 233.0 L400.4 234.2 L402.4 233.0 L404.4 234.2 L406.4 233.0 L408.4 234.2 L410.4 233.0 L412.4 234.2 L414.4 233.0 L416.4 234.2 L418.4 233.0 L420.4 234.2 L422.4 233.0 L424.4 234.2 L426.4 233.0 L428.4 234.2 L430.4 233.0 L432.4 234.2 L434.4 233.0 L436.4 234.2 L438.4 233.0 L440.4 234.2 L442.4 233.0 L444.4 234.2 L446.4 233.0 L448.4 234.2 L450.4 233.0 L452.4 234.2 L454.4 233.0 L456.4 234.2 L458.4 233.0 L460.4 234.2 L460.7 233.0"/>
<path d="M786.4 280.6 L788.4 279.4 L790.4 280.6 L792.4 279.4 L794.4 280.6 L796.4 279.4 L798.4 280.6 L800.4 279.4 L802.4 280.6 L804.4 279.4 L806.4 280.6 L808.4 279.4 L810.4 280.6 L812.4 279.4 L814.4 280.6 L816.4 279.4 L818.4 280.6 L820.4 279.4 L822.4 280.6 L824.4 279.4 L826.4 280.6 L828.4 279.4 L830.4 280.6 L832.4 279.4 L834.4 280.6 L836.4 279.4 L838.4 280.6 L839.7 279.4"/>
<path d="M852.5 280.6 L854.5 279.4 L856.5 280.6 L858.5 279.4 L860.5 280.6 L862.5 279.4 L864.5 280.6 L866.5 279.4 L868.5 280.6 L870.5 279.4 L872.5 280.6 L874.5 279.4 L876.5 280.6 L878.5 279.4 L880.5 280.6 L882.5 279.4 L884.5 280.6 L886.5 279.4 L888.5 280.6 L890.5 279.4 L892.5 280.6 L894.5 279.4 L896.5 280.6 L898.5 279.4 L900.5 280.6 L902.5 279.4 L904.5 280.6 L906.5 279.4 L908.5 280.6 L910.5 279.4 L912.5 280.6 L914.5 279.4 L916.5 280.6 L918.5 279.4 L920.5 280.6 L922.5 279.4 L924.5 280.6 L926.5 279.4 L928.5 280.6 L930.5 279.4 L932.5 280.6 L934.5 279.4 L936.5 280.6 L938.5 279.4 L940.5 280.6 L942.5 279.4 L944.5 280.6 L946.5 279.4 L948.5 280.6 L950.5 279.4 L952.5 280.6 L954.5 279.4 L956.5 280.6 L958.5 279.4 L960.5 280.6 L962.5 279.4 L964.5 280.6 L966.5 279.4 L968.5 280.6 L970.5 279.4 L972.5 280.6 L974.5 279.4 L976.5 280.6 L978.5 279.4 L980.5 280.6 L982.5 279.4 L984.5 280.6 L986.5 279.4 L988.5 280.6 L990.5 279.4 L992.5 280.6 L994.5 279.4 L996.5 280.6 L998.5 279.4 L1000.5 280.6 L1002.5 279.4 L1004.5 280.6 L1006.5 279.4 L1008.5 280.6 L1010.5 279.4 L1012.5 280.6 L1014.5 279.4 L1015.2 280.6"/>
<path d="M856.3 292.0 L858.3 290.8 L860.3 292.0 L862.3 290.8 L864.3 292.0 L866.3 290.8 L868.3 292.0 L870.3 290.8 L872.3 292.0 L874.3 290.8 L876.3 292.0 L878.3 290.8 L880.3 292.0 L882.3 290.8 L884.3 292.0 L886.3 290.8 L888.3 292.0 L890.3 290.8 L892.3 292.0 L894.3 290.8 L896.3 292.0 L898.3 290.8 L900.3 292.0 L902.3 290.8 L904.3 292.0 L906.3 290.8 L908.3 292.0 L910.3 290.8 L912.3 292.0 L914.0 290.8"/>
<path d="M820.5 303.2 L822.5 302.0 L824.5 303.2 L826.5 302.0 L828.5 303.2 L830.5 302.0 L832.5 303.2 L834.5 302.0 L836.5 303.2 L838.5 302.0 L840.5 303.2 L842.5 302.0 L844.5 303.2 L846.5 302.0 L848.5 303.2 L850.5 302.0 L852.5 303.2 L854.5 302.0 L856.5 303.2 L858.5 302.0 L860.5 303.2 L862.5 302.0 L864.5 303.2 L866.5 302.0 L868.5 303.2 L870.5 302.0 L872.5 303.2 L874.5 302.0 L876.5 303.2 L878.5 302.0 L880.5 303.2 L882.5 302.0 L884.5 303.2 L886.5 302.0 L888.5 303.2 L890.5 302.0 L892.5 303.2 L894.5 302.0 L896.5 303.2 L898.5 302.0 L900.5 303.2 L902.5 302.0 L904.5 303.2 L906.5 302.0 L908.5 303.2 L910.5 302.0 L912.5 303.2 L914.5 302.0 L916.5 303.2 L918.5 302.0 L920.5 303.2 L922.5 302.0 L924.5 303.2 L926.5 302.0 L928.5 303.2 L930.5 302.0 L932.5 303.2 L934.5 302.0 L936.5 303.2 L938.5 302.0 L940.5 303.2 L942.5 302.0 L944.5 303.2 L946.5 302.0 L948.5 303.2 L950.5 302.0 L952.5 303.2 L954.5 302.0 L956.5 303.2 L958.5 302.0 L960.5 303.2 L962.5 302.0 L964.5 303.2 L966.5 302.0 L968.5 303.2 L970.5 302.0 L972.5 303.2 L974.5 302.0 L976.5 303.2 L978.5 302.0 L980.5 303.2 L982.5 302.0 L984.5 303.2 L986.5 302.0 L988.5 303.2 L990.5 302.0 L992.5 303.2 L994.5 302.0 L996.5 303.2 L998.5 302.0 L1000.5 303.2 L1002.5 302.0 L1004.5 303.2 L1006.5 302.0 L1008.5 303.2 L1010.5 302.0 L1012.5 303.2 L1014.5 302.0 L1016.5 303.2 L1018.5 302.0 L1020.5 303.2 L1022.5 302.0 L1024.5 303.2 L1026.5 302.0 L1028.5 303.2 L1030.5 302.0 L1032.5 303.2 L1034.5 302.0 L1036.5 303.2 L1038.5 302.0 L1040.5 303.2 L1042.5 302.0 L1044.5 303.2 L1046.5 302.0 L1048.5 303.2 L1050.5 302.0 L1052.5 303.2 L1054.5 302.0 L1056.2 303.2"/>
<path d="M858.0 314.5 L860.0 313.3 L862.0 314.5 L864.0 313.3 L866.0 314.5 L868.0 313.3 L870.0 314.5 L872.0 313.3 L874.0 314.5 L876.0 313.3 L878.0 314.5 L880.0 313.3 L882.0 314.5 L884.0 313.3 L886.0 314.5 L888.0 313.3 L890.0 314.5 L892.0 313.3 L894.0 314.5 L896.0 313.3 L898.0 314.5 L900.0 313.3 L902.0 314.5 L904.0 313.3 L906.0 314.5 L908.0 313.3 L910.0 314.5 L912.0 313.3 L914.0 314.5 L916.0 313.3 L918.0 314.5 L920.0 313.3 L922.0 314.5 L924.0 313.3 L926.0 314.5 L928.0 313.3 L930.0 314.5 L932.0 313.3 L934.0 314.5 L936.0 313.3 L938.0 314.5 L940.0 313.3 L942.0 314.5 L944.0 313.3 L946.0 314.5 L948.0 313.3 L950.0 314.5 L952.0 313.3 L954.0 314.5 L956.0 313.3 L958.0 314.5 L960.0 313.3 L962.0 314.5 L964.0 313.3 L966.0 314.5 L968.0 313.3 L970.0 314.5 L972.0 313.3 L974.0 314.5 L976.0 313.3 L978.0 314.5 L980.0 313.3 L982.0 314.5 L984.0 313.3 L986.0 314.5 L988.0 313.3 L990.0 314.5 L992.0 313.3 L994.0 314.5 L996.0 313.3 L998.0 314.5 L1000.0 313.3 L1002.0 314.5 L1004.0 313.3 L1006.0 314.5 L1008.0 313.3 L1010.0 314.5 L1012.0 313.3 L1014.0 314.5 L1016.0 313.3 L1018.0 314.5 L1020.0 313.3 L1022.0 314.5 L1024.0 313.3 L1026.0 314.5 L1028.0 313.3 L1030.0 314.5 L1032.0 313.3 L1034.0 314.5 L1036.0 313.3 L1038.0 314.5 L1040.0 313.3 L1042.0 314.5 L1044.0 313.3 L1046.0 314.5 L1048.0 313.3 L1050.0 314.5 L1052.0 313.3 L1054.0 314.5 L1056.0 313.3 L1058.0 314.5 L1060.0 313.3"/>
<path d="M858.0 325.8 L860.0 324.6 L862.0 325.8 L864.0 324.6 L866.0 325.8 L868.0 324.6 L870.0 325.8 L872.0 324.6 L874.0 325.8 L876.0 324.6 L878.0 325.8 L880.0 324.6 L882.0 325.8 L884.0 324.6 L886.0 325.8 L888.0 324.6 L890.0 325.8 L892.0 324.6 L894.0 325.8 L896.0 324.6 L898.0 325.8 L900.0 324.6 L902.0 325.8 L904.0 324.6 L906.0 325.8 L908.0 324.6 L910.0 325.8 L912.0 324.6 L914.0 325.8 L916.0 324.6 L918.0 325.8 L920.0 324.6 L922.0 325.8 L924.0 324.6 L926.0 325.8 L928.0 324.6 L930.0 325.8 L932.0 324.6 L934.0 325.8 L936.0 324.6 L938.0 325.8 L940.0 324.6 L942.0 325.8 L944.0 324.6 L946.0 325.8 L948.0 324.6 L950.0 325.8 L952.0 324.6 L954.0 325.8 L956.0 324.6 L958.0 325.8 L960.0 324.6 L962.0 325.8 L964.0 324.6 L966.0 325.8 L968.0 324.6 L970.0 325.8 L972.0 324.6 L974.0 325.8 L976.0 324.6 L978.0 325.8 L980.0 324.6 L982.0 325.8 L984.0 324.6 L986.0 325.8 L988.0 324.6 L990.0 325.8 L992.0 324.6 L994.0 325.8 L996.0 324.6 L998.0 325.8 L1000.0 324.6 L1002.0 325.8 L1004.0 324.6 L1006.0 325.8 L1008.0 324.6 L1010.0 325.8 L1012.0 324.6 L1014.0 325.8 L1016.0 324.6 L1018.0 325.8 L1020.0 324.6 L1022.0 325.8 L1024.0 324.6 L1026.0 325.8 L1028.0 324.6 L1030.0 325.8 L1032.0 324.6 L1034.0 325.8 L1036.0 324.6 L1038.0 325.8 L1040.0 324.6 L1042.0 325.8 L1044.0 324.6 L1046.0 325.8 L1048.0 324.6 L1050.0 325.8 L1052.0 324.6 L1054.0 325.8 L1056.0 324.6 L1058.0 325.8 L1060.0 324.6 L1061.0 325.8"/>
<path d="M858.0 337.1 L860.0 335.9 L862.0 337.1 L864.0 335.9 L866.0 337.1 L868.0 335.9 L870.0 337.1 L872.0 335.9 L874.0 337.1 L876.0 335.9 L878.0 337.1 L880.0 335.9 L882.0 337.1 L884.0 335.9 L886.0 337.1 L888.0 335.9 L890.0 337.1 L892.0 335.9 L894.0 337.1 L896.0 335.9 L898.0 337.1 L900.0 335.9 L902.0 337.1 L904.0 335.9 L906.0 337.1 L908.0 335.9 L910.0 337.1 L912.0 335.9 L914.0 337.1 L916.0 335.9 L918.0 337.1 L920.0 335.9 L922.0 337.1 L924.0 335.9 L926.0 337.1 L928.0 335.9 L930.0 337.1 L932.0 335.9 L934.0 337.1 L936.0 335.9 L938.0 337.1 L940.0 335.9 L942.0 337.1 L944.0 335.9 L946.0 337.1 L948.0 335.9 L950.0 337.1 L952.0 335.9 L954.0 337.1 L956.0 335.9 L958.0 337.1 L960.0 335.9 L962.0 337.1 L964.0 335.9 L966.0 337.1 L968.0 335.9 L970.0 337.1 L972.0 335.9 L974.0 337.1 L976.0 335.9 L978.0 337.1 L980.0 335.9 L982.0 337.1 L984.0 335.9 L986.0 337.1 L988.0 335.9 L990.0 337.1 L992.0 335.9 L994.0 337.1 L996.0 335.9 L998.0 337.1 L1000.0 335.9 L1002.0 337.1 L1004.0 335.9 L1006.0 337.1 L1008.0 335.9 L1010.0 337.1 L1012.0 335.9 L1014.0 337.1 L1016.0 335.9 L1018.0 337.1 L1020.0 335.9 L1022.0 337.1 L1024.0 335.9 L1026.0 337.1 L1028.0 335.9 L1030.0 337.1 L1032.0 335.9 L1034.0 337.1 L1036.0 335.9 L1038.0 337.1 L1040.0 335.9 L1042.0 337.1 L1044.0 335.9 L1046.0 337.1 L1048.0 335.9 L1050.0 337.1 L1052.0 335.9 L1054.0 337.1 L1056.0 335.9 L1058.0 337.1 L1060.0 335.9 L1061.0 337.1"/>
<path d="M879.4 415.9 L881.4 414.7 L883.4 415.9 L885.4 414.7 L887.4 415.9 L889.4 414.7 L891.4 415.9 L893.4 414.7 L895.4 415.9 L897.4 414.7 L899.4 415.9 L901.4 414.7 L903.4 415.9 L905.4 414.7 L907.4 415.9 L909.4 414.7 L911.4 415.9 L913.4 414.7 L915.4 415.9 L917.4 414.7 L919.4 415.9 L921.4 414.7 L923.4 415.9 L925.4 414.7 L926.8 415.9"/>
<path d="M884.5 427.2 L886.5 426.0 L888.5 427.2 L890.5 426.0 L892.5 427.2 L894.5 426.0 L896.5 427.2 L898.5 426.0 L900.5 427.2 L902.5 426.0 L904.5 427.2 L906.5 426.0 L908.5 427.2 L910.5 426.0 L912.5 427.2 L914.5 426.0 L916.5 427.2 L918.5 426.0 L920.5 427.2 L922.5 426.0 L924.5 427.2 L926.5 426.0 L928.5 427.2 L930.5 426.0 L932.5 427.2 L934.5 426.0 L936.5 427.2 L938.3 426.0"/>
<path d="M1022.9 573.8 L1024.9 572.6 L1026.9 573.8 L1028.9 572.6 L1030.9 573.8 L1032.9 572.6 L1034.9 573.8 L1036.9 572.6 L1038.9 573.8 L1040.9 572.6 L1042.9 573.8 L1044.9 572.6 L1046.9 573.8 L1047.0 572.6"/>
</g></svg>
</body></html>
